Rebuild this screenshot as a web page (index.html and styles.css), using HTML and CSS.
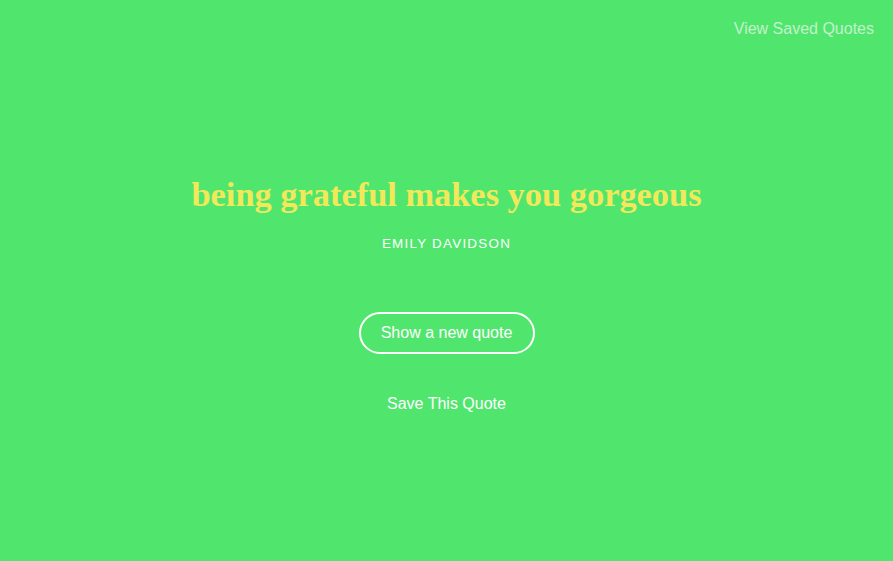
FILE: index.html
```html
<!DOCTYPE html>
<html>
<head>
<meta charset="utf-8">
<link rel="stylesheet" href="styles.css">
</head>
<body>
<header class="top">
  <a class="saved-link" href="#">View Saved Quotes</a>
</header>
<main class="main">
  <h1 class="quote">being grateful makes you gorgeous</h1>
  <p class="author">EMILY DAVIDSON</p>
  <button class="new-btn">Show a new quote</button>
  <button class="save-btn">Save This Quote</button>
</main>
</body>
</html>
```

FILE: styles.css
```css
html, body {
  margin: 0;
  padding: 0;
  height: 100%;
}
body {
  background: #50e66e;
  font-family: "Liberation Sans", Arial, sans-serif;
  color: #fff;
}
.top {
  display: flex;
  justify-content: flex-end;
  padding: 20px 19px 0 0;
  height: 20px;
}
.saved-link {
  color: rgba(235, 245, 235, 0.75);
  text-decoration: none;
  font-size: 16px;
}
.main {
  display: flex;
  flex-direction: column;
  align-items: center;
  padding-top: 132px;
}
.quote {
  margin: 0;
  font-family: "Liberation Serif", "DejaVu Serif", serif;
  font-weight: bold;
  font-size: 34.4px;
  line-height: 44px;
  color: #f2e85a;
}
.author {
  margin: 20px 0 0;
  font-size: 13.4px;
  letter-spacing: 1.25px;
}
.new-btn {
  margin-top: 61px;
  background: transparent;
  border: 2px solid #fff;
  border-radius: 22px;
  color: #fff;
  font-family: "Liberation Sans", Arial, sans-serif;
  font-size: 16px;
  width: 176px;
  height: 42px;
  padding: 0;
}
.save-btn {
  margin-top: 41px;
  background: transparent;
  border: none;
  color: #fff;
  font-family: "Liberation Sans", Arial, sans-serif;
  font-size: 16px;
  padding: 0;
}
```
